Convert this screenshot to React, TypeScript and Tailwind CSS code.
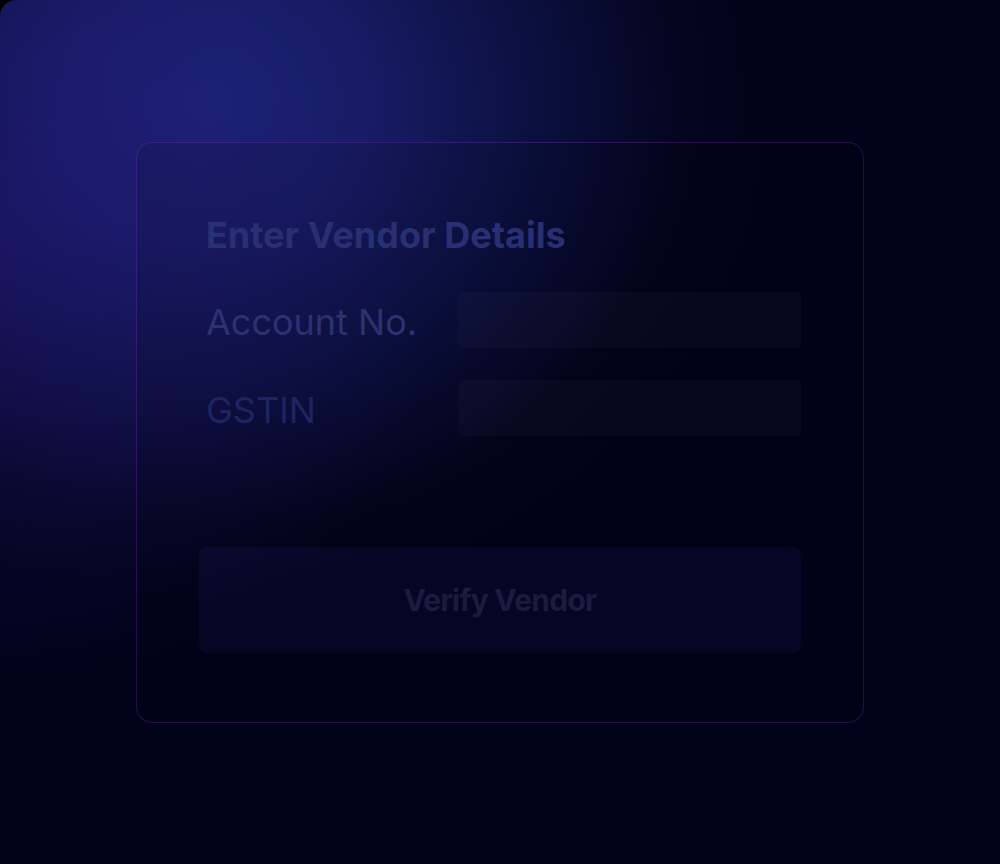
import React from 'react';

const FIELDS = [
  { label: 'Account No.', tone: 'text-[#2b3270]' },
  { label: 'GSTIN', tone: 'text-[#1e2461]' },
];

export default function App() {
  return (
    <div className="w-[1000px] h-[864px] bg-black" style={{ fontFamily: 'Inter, "Noto Sans", sans-serif' }}>
      <div className="w-full h-full rounded-tl-2xl flex items-center justify-center bg-[#02021a] bg-[radial-gradient(circle_at_0%_28%,rgba(40,22,124,0.42)_0%,transparent_38%),radial-gradient(560px_500px_at_21%_12%,#1a2373_0%,#161c64_28%,#0b1040_58%,#04051f_84%,#02021a_100%)]">
        {/* Vendor card */}
        <div className="w-[728px] h-[581px] rounded-2xl border border-purple-500/20 bg-black/10 px-[62px] pt-[72px]">
          <h1 className="pl-[7px] text-4xl font-bold text-[#283071]">Enter Vendor Details</h1>

          <div className="mt-[37px] flex flex-col gap-8">
            {FIELDS.map((f) => (
              <div key={f.label} className="flex items-center">
                <label className={`w-[259px] shrink-0 pl-[7px] pt-[5px] text-4xl ${f.tone}`}>{f.label}</label>
                <input className="flex-1 h-14 rounded bg-white/[0.025] outline-none" />
              </div>
            ))}
          </div>

          <button className="mt-[111px] w-full h-[106px] rounded-lg bg-[#4f46e5]/[0.07] text-3xl font-bold tracking-tight text-[#1a1c3f]">
            Verify Vendor
          </button>
        </div>
      </div>
    </div>
  );
}
